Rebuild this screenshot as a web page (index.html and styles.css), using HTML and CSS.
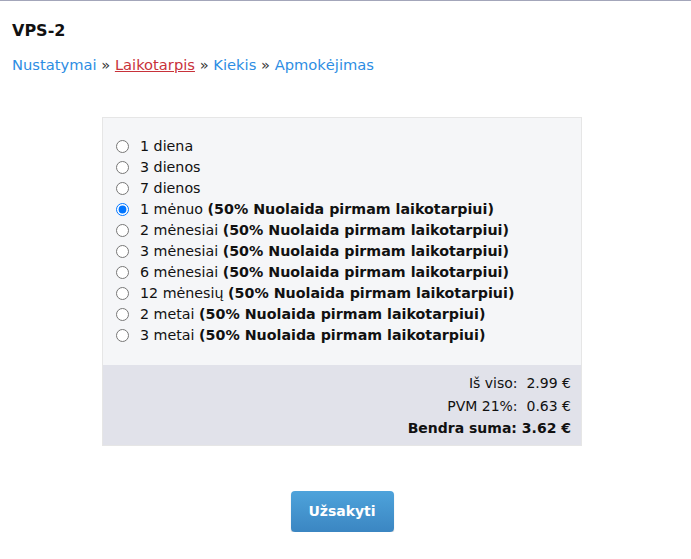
FILE: index.html
```html
<!DOCTYPE html>
<html>
<head>
<meta charset="utf-8">
<link rel="stylesheet" href="styles.css">
</head>
<body>
<div class="page">
  <h1 class="title">VPS-2</h1>
  <div class="crumbs">
    <a class="crumb" href="#">Nustatymai</a> » <a class="crumb active" href="#">Laikotarpis</a> » <a class="crumb" href="#">Kiekis</a> » <a class="crumb" href="#">Apmokėjimas</a>
  </div>
  <div class="order">
    <div class="box">
      <div class="options">
        <label class="opt"><input type="radio" name="p"><span>1 diena</span></label>
        <label class="opt"><input type="radio" name="p"><span>3 dienos</span></label>
        <label class="opt"><input type="radio" name="p"><span>7 dienos</span></label>
        <label class="opt"><input type="radio" name="p" checked><span>1 mėnuo <b>(50% Nuolaida pirmam laikotarpiui)</b></span></label>
        <label class="opt"><input type="radio" name="p"><span>2 mėnesiai <b>(50% Nuolaida pirmam laikotarpiui)</b></span></label>
        <label class="opt"><input type="radio" name="p"><span>3 mėnesiai <b>(50% Nuolaida pirmam laikotarpiui)</b></span></label>
        <label class="opt"><input type="radio" name="p"><span>6 mėnesiai <b>(50% Nuolaida pirmam laikotarpiui)</b></span></label>
        <label class="opt"><input type="radio" name="p"><span>12 mėnesių <b>(50% Nuolaida pirmam laikotarpiui)</b></span></label>
        <label class="opt"><input type="radio" name="p"><span>2 metai <b>(50% Nuolaida pirmam laikotarpiui)</b></span></label>
        <label class="opt"><input type="radio" name="p"><span>3 metai <b>(50% Nuolaida pirmam laikotarpiui)</b></span></label>
      </div>
      <div class="summary">
        <div class="row">Iš viso:&nbsp; 2.99 €</div>
        <div class="row">PVM 21%:&nbsp; 0.63 €</div>
        <div class="row total">Bendra suma: 3.62 €</div>
      </div>
    </div>
    <div class="actions">
      <button class="btn">Užsakyti</button>
    </div>
  </div>
</div>
</body>
</html>
```
FILE: styles.css
```css
html, body { margin: 0; padding: 0; background: #fff; }
body {
  font-family: "DejaVu Sans", Verdana, sans-serif;
  color: #111;
  border-top: 1px solid #a3a6ba;
}
.page { padding: 0 12px; }
.title {
  font-size: 16px;
  font-weight: bold;
  margin: 0;
  padding-top: 20px;
  line-height: 20px;
}
.crumbs {
  margin-top: 14px;
  font-size: 14.7px;
  line-height: 20px;
  color: #333;
}
.crumb { color: #2d8de3; text-decoration: none; }
.crumb.active { color: #c8323a; text-decoration: underline; }
.order {
  width: 480px;
  margin: 42px 0 0 90px;
}
.box {
  border: 1px solid #e6e6e6;
  background: #f5f6f8;
}
.options {
  padding: 18px 0 19px 13px;
  display: flex;
  flex-direction: column;
}
.opt {
  font-size: 14.25px;
  line-height: 21px;
  height: 21px;
  display: flex;
  align-items: center;
  white-space: nowrap;
}
.opt b { font-weight: bold; }
.opt input {
  margin: 0 11px 0 0;
  width: 13px;
  height: 13px;
}
.summary {
  background: #e1e2ea;
  padding: 7px 10px 5px 0;
  text-align: right;
  font-size: 14px;
}
.row { line-height: 22.5px; }
.total { font-weight: bold; }
.actions {
  display: flex;
  justify-content: center;
  padding-top: 45px;
}
.btn {
  width: 103px;
  height: 41px;
  border: none;
  border-radius: 4px;
  background: linear-gradient(#4ea3db, #3b86c2);
  color: #fff;
  font-family: "DejaVu Sans", Verdana, sans-serif;
  font-weight: bold;
  font-size: 14px;
  box-shadow: 0 1px 1px rgba(0,0,0,0.25);
}
```
